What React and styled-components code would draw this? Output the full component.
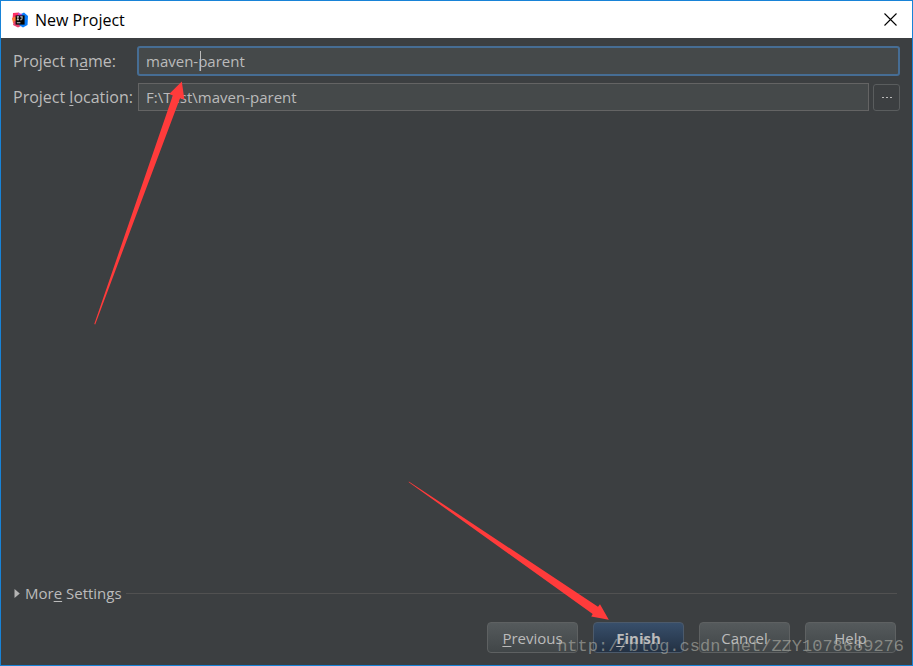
import React, { useState } from 'react';
import styled, { createGlobalStyle } from 'styled-components';

const GlobalStyle = createGlobalStyle`
  * {
    box-sizing: border-box;
  }

  body {
    margin: 0;
    font-family: 'Open Sans', 'Noto Sans', sans-serif;
    font-size: 15px;
    color: #bbbbbb;
  }

  button, input {
    font: inherit;
    color: inherit;
  }
`;

const Dialog = styled.div`
  position: relative;
  display: flex;
  flex-direction: column;
  min-height: 100vh;
  background: #3c3f41;
  border: 1px solid #1883d7;
  overflow: hidden;
`;

const TitleBar = styled.header`
  display: flex;
  align-items: center;
  gap: 7px;
  height: 37px;
  padding: 0 15px 0 11px;
  background: white;
  color: black;
`;

const Title = styled.h1`
  flex: 1;
  margin: 0;
  font-size: 16px;
  line-height: 20px;
  font-weight: 400;
`;

const CloseButton = styled.button`
  display: flex;
  padding: 0;
  border: none;
  background: transparent;
`;

const Form = styled.form`
  flex: 1;
  display: flex;
  flex-direction: column;
`;

const Fields = styled.div`
  flex: 1;
  display: grid;
  grid-template-columns: 124px 1fr;
  grid-auto-rows: max-content;
  align-items: center;
  row-gap: 7px;
  padding: 8px 12px;
`;

const Label = styled.label`
  white-space: nowrap;
  font-size: 16px;
  line-height: 20px;
`;

const Mnemonic = styled.span`
  text-decoration: underline;
  text-decoration-thickness: 1px;
  text-underline-offset: 2px;
  text-decoration-skip-ink: none;
`;

const Field = styled.div`
  position: relative;
  display: flex;
  align-items: center;
  gap: 4px;
`;

const Input = styled.input`
  flex: 1;
  min-width: 0;
  height: ${p => p.$active ? 30 : 28}px;
  padding: 0 7px;
  background: #45494a;
  border: ${p => p.$active ? '2px solid #466d94' : '1px solid #646464'};
  border-radius: ${p => p.$active ? 3 : 0}px;
  margin-left: ${p => p.$active ? 0 : 1}px;
  outline: none;
`;

const Caret = styled.span`
  position: absolute;
  left: 63px;
  top: 5px;
  width: 1px;
  height: 20px;
  background: #bbbbbb;
`;

const BrowseButton = styled.button`
  display: flex;
  align-items: center;
  justify-content: center;
  width: 27px;
  height: 27px;
  padding: 0;
  background: #3c3f41;
  border: 1px solid #5a5d5e;
  border-radius: 3px;
`;

const MoreSettings = styled.div`
  display: flex;
  align-items: center;
  gap: 4px;
  padding: 0 15px 0 13px;
`;

const Disclosure = styled.button`
  display: flex;
  align-items: center;
  gap: 5px;
  padding: 0;
  border: none;
  background: transparent;
  line-height: 24px;
`;

const Rule = styled.hr`
  flex: 1;
  margin: 0;
  border: none;
  border-top: 1px solid #515151;
`;

const Footer = styled.footer`
  display: flex;
  justify-content: flex-end;
  gap: 15px;
  padding: 17px 16px 12px;
`;

const ButtonSlot = styled.div`
  position: relative;
  display: flex;
`;

const Button = styled.button`
  width: 91px;
  height: 31px;
  padding: 0;
  border: 1px solid ${p => p.$primary ? '#4c5a6b' : '#5e6162'};
  border-radius: 4px;
  background: ${p => p.$primary
    ? 'linear-gradient(#384f6b, #233143)'
    : 'linear-gradient(#555a5c, #414648)'};
  font-weight: ${p => p.$primary ? 700 : 400};
`;

const NameArrow = styled.svg`
  position: absolute;
  left: 93px;
  top: 80px;
  pointer-events: none;
`;

const FinishArrow = styled.svg`
  position: absolute;
  right: 74px;
  bottom: 32px;
  pointer-events: none;
`;

const Watermark = styled.span`
  position: absolute;
  right: 8px;
  bottom: 7px;
  font-family: 'Liberation Mono', monospace;
  font-size: 17px;
  line-height: 22px;
  color: rgba(190, 190, 180, 0.55);
  pointer-events: none;
`;

function AppLogo() {
  return (
    <svg width="16" height="16" viewBox="0 0 16 16" aria-hidden="true">
      <path d="M1 1 L7 0.5 L9 5 L4 10 L0.5 8 Z" fill="#fe2f64" />
      <path d="M0 6 L5 4 L5 13 L1 11 Z" fill="#fc7b36" />
      <path d="M2 9 L6 10 L9 14 L6 15.5 L1 13 Z" fill="#e8406f" />
      <path d="M9 2 L12 0.5 L16 4 L15.5 13 L11 15.5 L7 13 Z" fill="#087cfa" />
      <path d="M6 1 L10 2 L9 5 L6 4 Z" fill="#b74ad0" />
      <rect x="3.6" y="3.4" width="9" height="9.2" fill="#050505" />
      <path
        d="M4.8 4.8 H7 M5.9 4.8 V7.8 M4.8 7.8 H7 M8.2 4.8 H10.6 M10 4.8 V7 Q10 7.8 9.2 7.8 H8.2"
        fill="none"
        stroke="#fff"
        strokeWidth="0.8"
      />
      <rect x="4.8" y="10.4" width="3.6" height="0.8" fill="#fff" />
    </svg>
  );
}

export default function App() {
  const [name, setName] = useState('maven-parent');
  const [location, setLocation] = useState('F:\\Test\\maven-parent');

  return (
    <>
      <GlobalStyle />
      <Dialog>
        <TitleBar>
          <AppLogo />
          <Title>New Project</Title>
          <CloseButton aria-label="Close">
            <svg width="13" height="13" viewBox="0 0 13 13">
              <path d="M0.5 0.5 L12.5 12.5 M12.5 0.5 L0.5 12.5" stroke="#000" strokeWidth="1.1" />
            </svg>
          </CloseButton>
        </TitleBar>

        <Form onSubmit={(e) => e.preventDefault()}>
          <Fields>
            <Label htmlFor="project-name">Project n<Mnemonic>a</Mnemonic>me:</Label>
            <Field>
              <Input id="project-name" $active value={name} onChange={(e) => setName(e.target.value)} />
              <Caret />
            </Field>

            <Label htmlFor="project-location">Project <Mnemonic>l</Mnemonic>ocation:</Label>
            <Field>
              <Input id="project-location" value={location} onChange={(e) => setLocation(e.target.value)} />
              <BrowseButton type="button" aria-label="Browse">
                <svg width="10" height="2" viewBox="0 0 10 2" fill="#bbbbbb">
                  <rect x="0" y="1" width="2" height="1" />
                  <rect x="4" y="1" width="2" height="1" />
                  <rect x="8" y="1" width="2" height="1" />
                </svg>
              </BrowseButton>
            </Field>
          </Fields>

          <MoreSettings>
            <Disclosure type="button" aria-expanded="false">
              <svg width="6" height="9" viewBox="0 0 6 9">
                <path d="M0.5 0 L5.8 4.5 L0.5 9 Z" fill="#b4b4b4" />
              </svg>
              <span>Mor<Mnemonic>e</Mnemonic> Settings</span>
            </Disclosure>
            <Rule />
          </MoreSettings>

          <Footer>
            <Button type="button"><Mnemonic>P</Mnemonic>revious</Button>
            <ButtonSlot>
              <Button type="submit" $primary><Mnemonic>F</Mnemonic>inish</Button>
              <FinishArrow width="202" height="140" viewBox="0 0 202 140" aria-hidden="true">
                <path d="M0.8 0.4 L190 125.7 L192 123.3 L200.8 138.8 L183.2 135.6 L184.7 133 L0.8 1.2 Z" fill="#ff3b3b" />
              </FinishArrow>
            </ButtonSlot>
            <Button type="button">Cancel</Button>
            <Button type="button">Help</Button>
          </Footer>
        </Form>

        <NameArrow width="92" height="246" viewBox="0 0 92 246" aria-hidden="true">
          <path d="M0.3 243 L78.8 14.6 L75.2 13 L87.8 0.6 L90.4 18.4 L86 17.2 L1.2 243.4 Z" fill="#ff3b3b" />
        </NameArrow>
        <Watermark>http://blog.csdn.net/ZZY1078689276</Watermark>
      </Dialog>
    </>
  );
}
